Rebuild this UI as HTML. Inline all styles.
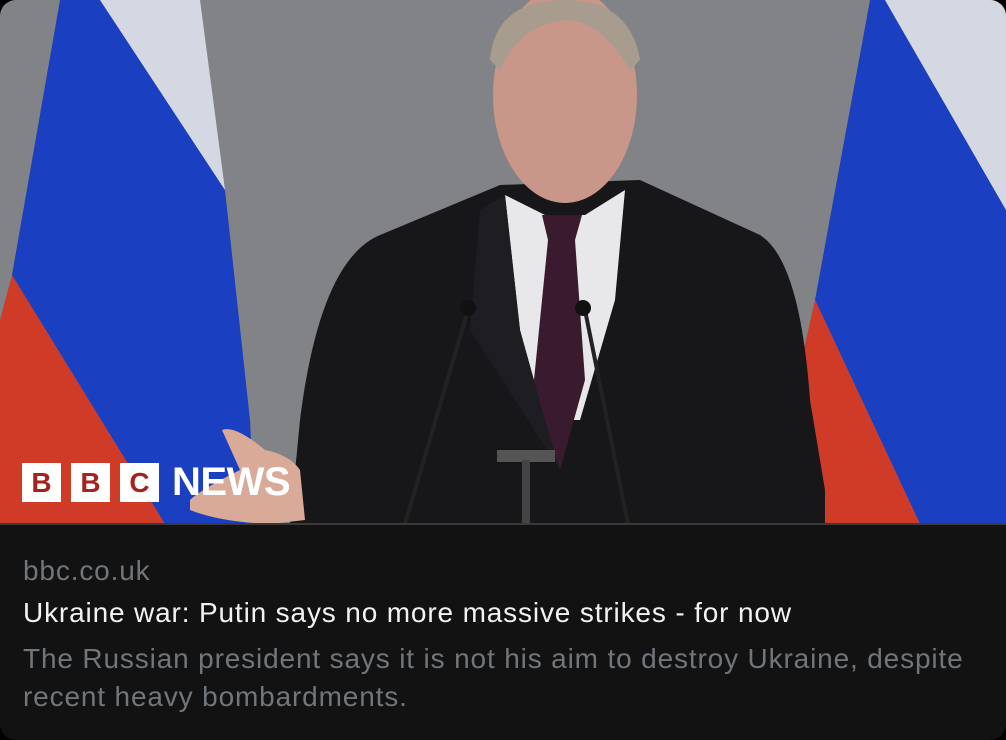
<!DOCTYPE html>
<html><head><style>
html,body{margin:0;padding:0;background:#000;width:1006px;height:740px;overflow:hidden}
.card{position:absolute;left:0;top:0;width:1006px;height:740px;border-radius:16px;overflow:hidden;background:#121212}
svg{position:absolute;left:0;top:0}
.bbc{position:absolute;top:463px;height:39px;width:39px;background:#fff;color:#a4231d;font:bold 28px/39px "Liberation Sans",sans-serif;text-align:center}
.news{position:absolute;left:172px;top:458px;color:#fff;font:bold 40px/48px "Liberation Sans",sans-serif;letter-spacing:-0.5px}
.t{position:absolute;left:23px;font-family:"Liberation Sans",sans-serif;font-size:28px;letter-spacing:0.85px;white-space:nowrap}
</style></head><body>
<div class="card">
<svg width="1006" height="525" viewBox="0 0 1006 525">
<rect width="1006" height="525" fill="#828387"/>
<polygon points="0,320 12,275 165,524 0,524" fill="#cf3b26"/>
<polygon points="60,0 100,0 225,190 250,420 255,524 165,524 12,275" fill="#1a3fc0"/>
<polygon points="100,0 200,0 225,190" fill="#d4d8e2"/>
<polygon points="870,0 885,0 1006,210 1006,524 920,524 815,300" fill="#1a3fc0"/>
<polygon points="885,0 1006,0 1006,210" fill="#d4d8e2"/>
<polygon points="815,300 920,524 820,524 797,380" fill="#cf3b26"/>
<path d="M290,524 L300,420 Q320,260 380,235 L500,185 L640,180 L760,235 Q800,260 810,400 L825,490 L825,524 Z" fill="#17171a"/>
<polygon points="505,195 545,215 585,215 625,190 615,300 580,420 545,420 520,330" fill="#e8e8ea"/>
<polygon points="542,215 582,215 575,240 585,380 560,470 533,390 548,240" fill="#3a1a2e"/>
<polygon points="505,195 520,330 545,420 560,470 470,330 480,210" fill="#1e1e22"/>
<ellipse cx="565" cy="95" rx="72" ry="108" fill="#c9968a"/>
<path d="M490,60 Q495,0 565,0 Q630,0 640,60 L630,70 Q600,20 565,20 Q520,25 500,70 Z" fill="#a89c8f"/>
<path d="M190,500 Q200,490 240,470 L222,430 Q235,425 265,450 Q290,455 300,470 L305,520 L270,524 Q220,522 190,510 Z" fill="#d9aa98"/>
<path d="M405,524 L468,310 M628,524 L585,310" stroke="#222" stroke-width="4" fill="none"/>
<circle cx="468" cy="308" r="8" fill="#111"/><circle cx="583" cy="308" r="8" fill="#111"/>
<rect x="497" y="450" width="58" height="12" fill="#555"/>
<rect x="522" y="460" width="8" height="64" fill="#444"/>
<rect x="0" y="523" width="1006" height="2" fill="#3a3a3a"/>
</svg>
<div class="bbc" style="left:22px">B</div>
<div class="bbc" style="left:71px">B</div>
<div class="bbc" style="left:120px">C</div>
<div class="news">NEWS</div>
<div class="t" style="top:555px;color:#6f767c">bbc.co.uk</div>
<div class="t" style="top:597px;color:#f2f2f2">Ukraine war: Putin says no more massive strikes - for now</div>
<div class="t" style="top:640px;color:#6f767c;line-height:38px">The Russian president says it is not his aim to destroy Ukraine, despite<br>recent heavy bombardments.</div>
</div>
</body></html>
